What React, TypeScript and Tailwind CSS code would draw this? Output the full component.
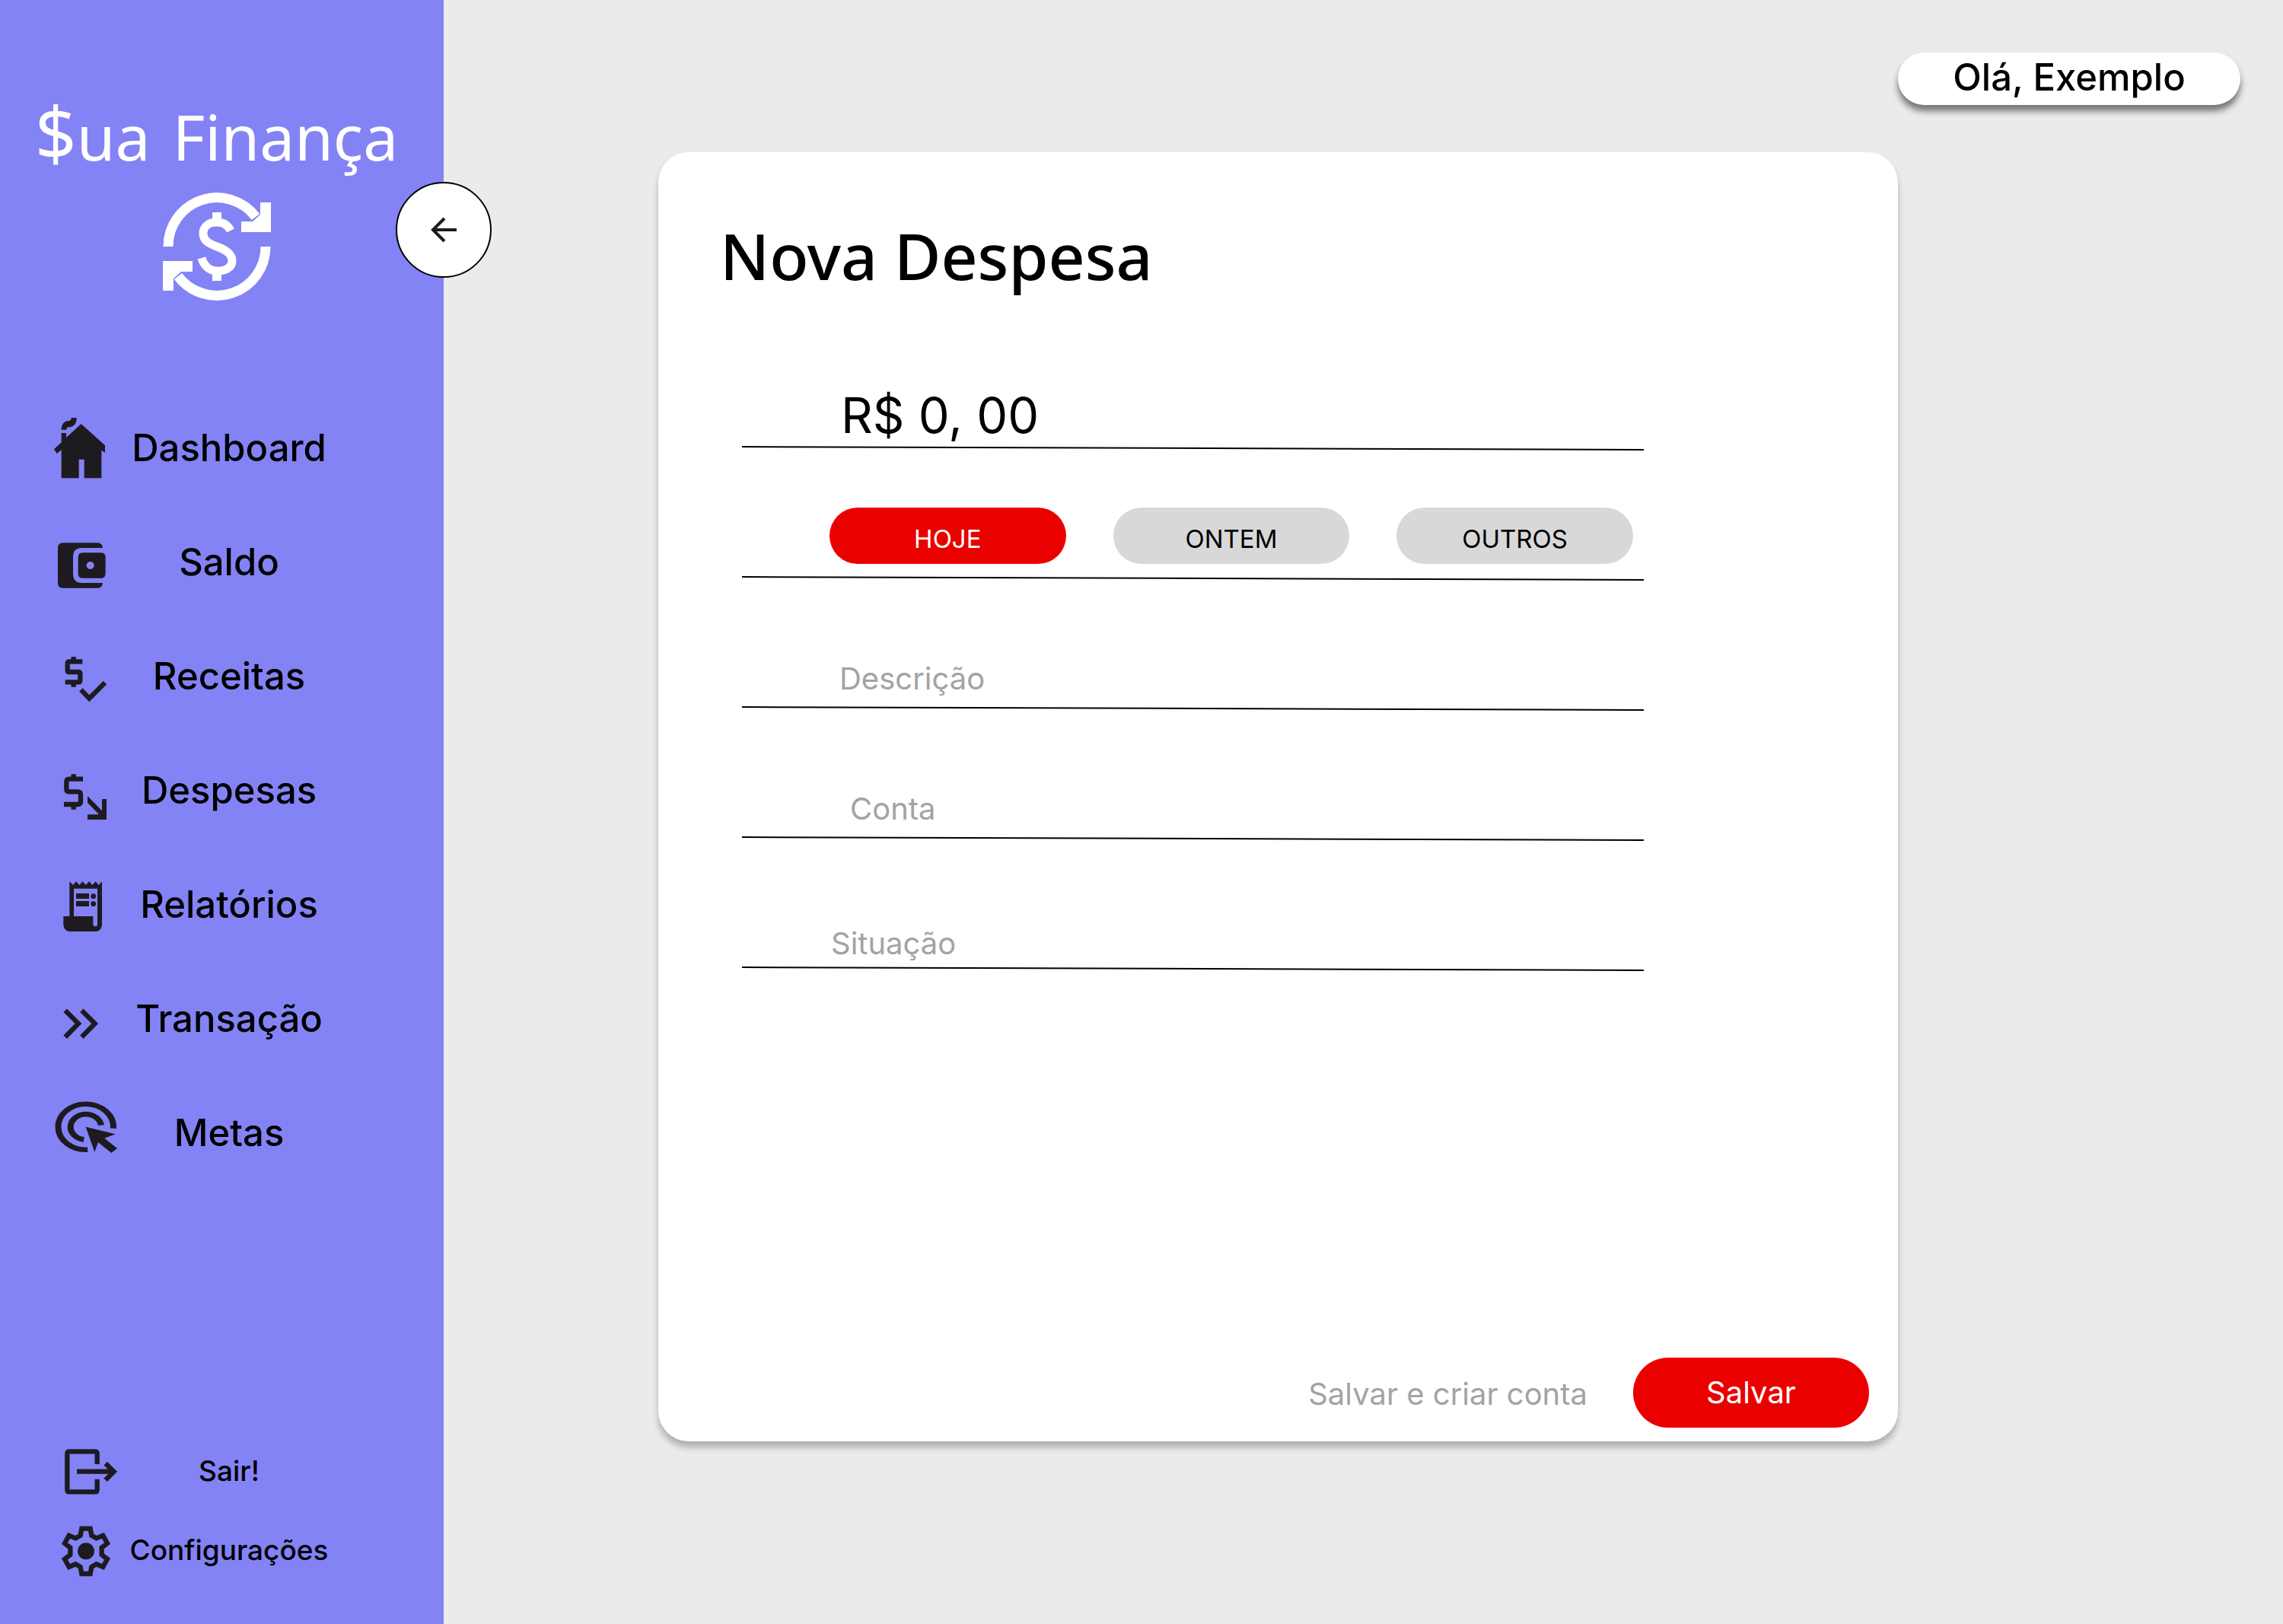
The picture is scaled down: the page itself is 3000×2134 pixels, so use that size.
import { useState, type ReactNode } from "react";

function Icon({ children }: { children: ReactNode }) {
  return (
    <svg viewBox="0 0 270 270" className="size-[90px] shrink-0 text-[#1d1b20]" fill="currentColor" aria-hidden="true">
      {children}
    </svg>
  );
}

const HouseIcon = (
  <Icon>
    <path d="M47 62C47 40 60 27 74 27Q86 27 86 15H107Q107 50 76 52Q67 52 67 62Z" />
    <path d="M125 39L219 124V153L205 143V253H137V179H116V253H47V142L29 156L18 139L47 112V75H66V93Z" />
  </Icon>
);

const WalletIcon = (
  <Icon>
    <path d="M53 58H190Q208 58 210 78H128Q93 78 93 113V181Q93 216 128 216H210Q208 236 190 236H53Q33 236 33 216V78Q33 58 53 58Z" />
    <path
      fillRule="evenodd"
      d="M131 97H203Q221 97 221 115V179Q221 197 203 197H131Q113 197 113 179V115Q113 97 131 97ZM161 132A15 15 0 1 0 161 162A15 15 0 1 0 161 132Z"
    />
  </Icon>
);

const IncomeIcon = (
  <Icon>
    <g fill="none" stroke="currentColor" strokeWidth="19">
      <path d="M130 76H78Q71 76 71 83V110Q71 117 78 117H114Q121 117 121 124V150Q121 157 114 157H62" />
      <path d="M95 57V76M95 157V176" />
      <path d="M124 187L157 221L219 159" />
    </g>
  </Icon>
);

const ExpenseIcon = (
  <Icon>
    <g fill="none" stroke="currentColor" strokeWidth="19">
      <path d="M132 89H78Q67 89 67 100V128Q67 139 78 139H112Q123 139 123 150V178Q123 189 112 189H57" />
      <path d="M95 70V89M95 189V209" />
    </g>
    <path d="M150 156L207 214V168H225V249H150V229H195L150 182Z" />
  </Icon>
);

const ReceiptIcon = (
  <Icon>
    <path
      fillRule="evenodd"
      d="M79 43L93 57L105 43L118 57L131 43L143 57L156 43L169 57L182 43L194 57L207 43V214Q205 238 184 240H79Q57 238 55 214V180H79ZM96 71V180H172V212Q173 220 180 220Q188 220 189 212V71Z"
    />
    <path d="M105 90H156V111H105ZM105 120H156V141H105Z" />
    <circle cx="173" cy="101" r="10" />
    <circle cx="173" cy="131" r="10" />
  </Icon>
);

const TransferIcon = (
  <Icon>
    <path d="M62 101L114 153L62 206M127 101L179 153L127 206" fill="none" stroke="currentColor" strokeWidth="19" />
  </Icon>
);

const GoalIcon = (
  <Icon>
    <g transform="translate(143 110) scale(1.21 1)" fill="none" stroke="currentColor" strokeWidth="20">
      <path d="M6 90A90 90 0 1 1 90 6" />
      <path d="M-6 50A50 50 0 1 1 50 -6" />
    </g>
    <path d="M143 110L260 139L217 155L267 195L244 213L192 171L178 209Z" />
  </Icon>
);

const ExitIcon = (
  <Icon>
    <g fill="none" stroke="currentColor" strokeWidth="19">
      <path d="M188 108V66Q188 58 180 58H78Q70 58 70 66V209Q70 217 78 217H180Q188 217 188 209V167" />
      <path d="M108 137H250M221 105L254 137L221 170" />
    </g>
  </Icon>
);

const GearIcon = (
  <Icon>
    <g transform="translate(144 139)">
      <circle r="33" />
      <path
        d="M17 -89L22 -62L41 -51L67 -62L84 -31L62 -14V14L84 31L67 62L41 51L22 62L17 89H-17L-22 62L-41 51L-67 62L-84 31L-62 14V-14L-84 -31L-67 -62L-41 -51L-22 -62L-17 -89Z"
        fill="none"
        stroke="currentColor"
        strokeWidth="19"
      />
    </g>
  </Icon>
);

function Logo() {
  const half = (
    <>
      <path d="M7 71A64 64 0 0 1 122 32" fill="none" stroke="currentColor" strokeWidth="13" />
      <path d="M128 13H142V52H103V38H118L128 29Z" />
    </>
  );
  return (
    <svg viewBox="0 0 142 142" className="size-[142px]" fill="currentColor" aria-hidden="true">
      {half}
      <g transform="rotate(180 71 71)">{half}</g>
      <path
        d="M89 50C85 42 79 39 71 39C60 39 53 45 53 54C53 63 60 67 71 71C84 76 91 81 91 90C91 98 83 103 72 103C62 103 54 97 51 86"
        fill="none"
        stroke="currentColor"
        strokeWidth="11"
      />
      <path d="M65 26H77V38H65ZM65 104H77V116H65Z" />
    </svg>
  );
}

const mainLinks = [
  { label: "Dashboard", icon: HouseIcon },
  { label: "Saldo", icon: WalletIcon },
  { label: "Receitas", icon: IncomeIcon },
  { label: "Despesas", icon: ExpenseIcon },
  { label: "Relatórios", icon: ReceiptIcon },
  { label: "Transação", icon: TransferIcon },
  { label: "Metas", icon: GoalIcon },
];

const footerLinks = [
  { label: "Sair!", icon: ExitIcon },
  { label: "Configurações", icon: GearIcon },
];

function Sidebar() {
  return (
    <aside className="relative flex w-[583px] shrink-0 flex-col bg-[#8383f5] pt-[124px] pb-[45px]">
      <div className="flex flex-col items-center gap-6 pr-[14px] text-white">
        <p className="font-['Noto_Sans',sans-serif] text-[82px] leading-[100px] whitespace-nowrap">
          <span className="mr-2">
            <span className="text-[96px]">$</span>ua
          </span>{" "}
          Finança
        </p>
        <Logo />
      </div>
      <button
        type="button"
        aria-label="Recolher menu"
        className="absolute top-[239px] -right-[63px] flex size-[126px] items-center justify-center rounded-full border-2 border-black bg-white"
      >
        <svg viewBox="0 0 34 34" className="size-[34px]" fill="none" stroke="#1d1b20" strokeWidth="4" aria-hidden="true">
          <path d="M34 17H3M18 2L3 17L18 32" />
        </svg>
      </button>
      <nav aria-label="Principal" className="mt-[119px] flex flex-col pl-[65px]">
        {mainLinks.map((l) => (
          <a key={l.label} href="#" className="flex h-[150px] items-center text-[49px] font-medium text-black">
            {l.icon}
            <span className="w-[292px] text-center">{l.label}</span>
          </a>
        ))}
      </nav>
      <nav aria-label="Conta" className="mt-auto flex flex-col pl-[65px]">
        {footerLinks.map((l) => (
          <a key={l.label} href="#" className="flex h-[104px] items-center text-[37px] font-medium text-black">
            {l.icon}
            <span className="w-[292px] text-center">{l.label}</span>
          </a>
        ))}
      </nav>
    </aside>
  );
}

function Rule() {
  return (
    <svg viewBox="0 0 1186 6" preserveAspectRatio="none" className="block h-1.5 w-full shrink-0" aria-hidden="true">
      <line x1="0" y1="1" x2="1186" y2="5" stroke="#000" strokeWidth="2" />
    </svg>
  );
}

function Row({ children }: { children: ReactNode }) {
  return (
    <div className="flex h-[171px] flex-col justify-end">
      {children}
      <Rule />
    </div>
  );
}

const days = ["HOJE", "ONTEM", "OUTROS"];

function ExpenseForm() {
  const [day, setDay] = useState("HOJE");
  return (
    <form
      onSubmit={(e) => e.preventDefault()}
      className="flex flex-1 flex-col rounded-[40px] bg-white pt-[86px] shadow-[0_8px_8px_rgba(0,0,0,0.25)]"
    >
      <h1 className="pl-[81px] font-['Noto_Sans',sans-serif] text-[84px] leading-[100px] font-medium">Nova Despesa</h1>
      <div className="mt-[35px] mr-[334px] ml-[110px] flex flex-col">
        <Row>
          <input
            aria-label="Valor"
            defaultValue="R$ 0, 00"
            className="h-20 w-full bg-transparent pl-[130px] text-[65px] outline-none"
          />
        </Row>
        <Row>
          <div className="mb-4 grid grid-cols-3 gap-[62px] pr-[14px] pl-[115px]">
            {days.map((d) => (
              <button
                key={d}
                type="button"
                aria-pressed={d === day}
                onClick={() => setDay(d)}
                className="h-[74px] rounded-full bg-[#d8d8d8] pt-2 text-[33px] leading-none text-black aria-pressed:bg-[#eb0000] aria-pressed:text-white"
              >
                {d}
              </button>
            ))}
          </div>
        </Row>
        <Row>
          <input
            aria-label="Descrição"
            placeholder="Descrição"
            className="h-[74px] w-full bg-transparent pl-[128px] text-[40px] outline-none placeholder:text-[#a3a3a3]"
          />
        </Row>
        <Row>
          <input
            aria-label="Conta"
            placeholder="Conta"
            className="h-[74px] w-full bg-transparent pl-[142px] text-[40px] outline-none placeholder:text-[#a3a3a3]"
          />
        </Row>
        <Row>
          <input
            aria-label="Situação"
            placeholder="Situação"
            className="h-[62px] w-full bg-transparent pl-[117px] text-[40px] outline-none placeholder:text-[#a3a3a3]"
          />
        </Row>
      </div>
      <div className="mt-auto flex items-center justify-end gap-[60px] pr-[38px] pb-[18px] text-[40px]">
        <button type="button" className="pt-1 text-[#a3a3a3]">
          Salvar e criar conta
        </button>
        <button type="submit" className="h-[92px] w-[310px] rounded-full bg-[#eb0000] text-white">
          Salvar
        </button>
      </div>
    </form>
  );
}

export default function App() {
  return (
    <div className="flex min-h-screen bg-[#ebebeb] font-['Inter',sans-serif] text-black">
      <Sidebar />
      <main className="flex min-w-0 flex-1 flex-col pt-[69px] pb-60">
        <header className="flex justify-end pr-14">
          <div className="flex h-[69px] w-[450px] items-center justify-center rounded-full bg-white pb-1 text-[49px] leading-none font-medium whitespace-nowrap shadow-[0_8px_8px_rgba(0,0,0,0.5)]">
            Olá, Exemplo
          </div>
        </header>
        <div className="mt-[62px] flex flex-1 flex-col pr-[506px] pl-[282px]">
          <ExpenseForm />
        </div>
      </main>
    </div>
  );
}
